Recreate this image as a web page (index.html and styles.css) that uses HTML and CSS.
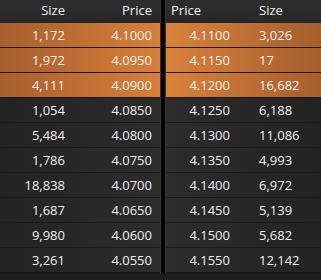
FILE: index.html
```html
<!DOCTYPE html>
<html>
<head>
<meta charset="utf-8">
<link rel="stylesheet" href="styles.css">
</head>
<body>
<div class="book">
  <div class="panel bids">
    <div class="row head"><span class="c1">Size</span><span class="c2">Price</span></div>
    <div class="row hi"><span class="c1">1,172</span><span class="c2">4.1000</span></div>
    <div class="row hi"><span class="c1">1,972</span><span class="c2">4.0950</span></div>
    <div class="row hi"><span class="c1">4,111</span><span class="c2">4.0900</span></div>
    <div class="row"><span class="c1">1,054</span><span class="c2">4.0850</span></div>
    <div class="row"><span class="c1">5,484</span><span class="c2">4.0800</span></div>
    <div class="row"><span class="c1">1,786</span><span class="c2">4.0750</span></div>
    <div class="row"><span class="c1">18,838</span><span class="c2">4.0700</span></div>
    <div class="row"><span class="c1">1,687</span><span class="c2">4.0650</span></div>
    <div class="row"><span class="c1">9,980</span><span class="c2">4.0600</span></div>
    <div class="row"><span class="c1">3,261</span><span class="c2">4.0550</span></div>
  </div>
  <div class="divider"></div>
  <div class="panel asks">
    <div class="row head"><span class="c1">Price</span><span class="c2">Size</span></div>
    <div class="row hi"><span class="c1">4.1100</span><span class="c2">3,026</span></div>
    <div class="row hi"><span class="c1">4.1150</span><span class="c2">17</span></div>
    <div class="row hi"><span class="c1">4.1200</span><span class="c2">16,682</span></div>
    <div class="row"><span class="c1">4.1250</span><span class="c2">6,188</span></div>
    <div class="row"><span class="c1">4.1300</span><span class="c2">11,086</span></div>
    <div class="row"><span class="c1">4.1350</span><span class="c2">4,993</span></div>
    <div class="row"><span class="c1">4.1400</span><span class="c2">6,972</span></div>
    <div class="row"><span class="c1">4.1450</span><span class="c2">5,139</span></div>
    <div class="row"><span class="c1">4.1500</span><span class="c2">5,682</span></div>
    <div class="row"><span class="c1">4.1550</span><span class="c2">12,142</span></div>
  </div>
</div>
</body>
</html>
```

FILE: styles.css
```css
html, body {
  margin: 0;
  padding: 0;
  background: #1f1f1f;
  width: 321px;
  height: 280px;
  overflow: hidden;
}
body {
  font-family: "Open Sans", "DejaVu Sans", sans-serif;
  font-size: 13px;
  color: #f0f0f0;
}
.book {
  display: flex;
  height: 274px;
}
.panel {
  display: flex;
  flex-direction: column;
}
.bids {
  width: 160px;
  border-right: 1px solid #363636;
}
.asks {
  flex: 1;
  border-left: 1px solid #363636;
}
.divider {
  width: 4px;
  background: #000;
}
.row {
  display: grid;
  height: 24px;
  line-height: 24px;
  border-bottom: 1px solid #1b1b1b;
}
.row.head {
  height: 23px;
  line-height: 21px;
  border-bottom: 0;
  background: linear-gradient(#2e2e2e, #262626);
}
.bids .row {
  grid-template-columns: 65px 87px;
  background: linear-gradient(90deg, #232323, #2c2c2c);
}
.asks .row {
  grid-template-columns: 64px 1fr;
  background: linear-gradient(90deg, #2c2c2c, #232323);
}
.bids .row.head, .asks .row.head {
  background: linear-gradient(#2e2e2e, #262626);
}
.bids .row.hi {
  background: linear-gradient(90deg, #a75f2d, #d87f39);
}
.asks .row.hi {
  background: linear-gradient(90deg, #d98239, #a55e2d);
}
.bids .c1, .bids .c2 {
  text-align: right;
}
.asks .c1 {
  text-align: right;
}
.asks .c2 {
  padding-left: 29px;
}
.asks .head .c1 {
  text-align: left;
  padding-left: 5px;
}
```
